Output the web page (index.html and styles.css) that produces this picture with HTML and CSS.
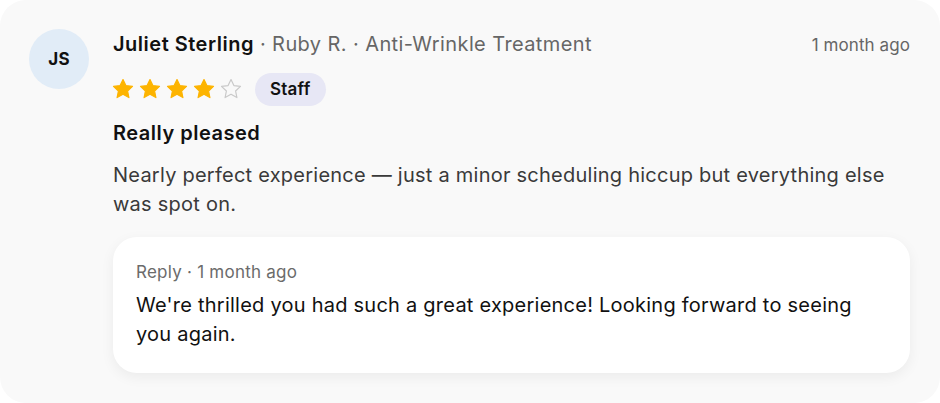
FILE: index.html
```html
<!DOCTYPE html>
<html>
<head>
<meta charset="utf-8">
<link rel="stylesheet" href="styles.css">
</head>
<body>
<div class="card">
  <div class="avatar">JS</div>
  <div class="content">
    <div class="header">
      <div class="who"><span class="name">Juliet Sterling</span><span class="meta"> · Ruby R. · Anti-Wrinkle Treatment</span></div>
      <div class="time">1 month ago</div>
    </div>
    <div class="rating">
      <div class="stars">
        <svg class="star" viewBox="0 0 24 24"><path class="on" d="M12 2.5l2.9 6.1 6.6.8-4.9 4.6 1.3 6.6L12 17.3l-5.9 3.3 1.3-6.6-4.9-4.6 6.6-.8z"/></svg>
        <svg class="star" viewBox="0 0 24 24"><path class="on" d="M12 2.5l2.9 6.1 6.6.8-4.9 4.6 1.3 6.6L12 17.3l-5.9 3.3 1.3-6.6-4.9-4.6 6.6-.8z"/></svg>
        <svg class="star" viewBox="0 0 24 24"><path class="on" d="M12 2.5l2.9 6.1 6.6.8-4.9 4.6 1.3 6.6L12 17.3l-5.9 3.3 1.3-6.6-4.9-4.6 6.6-.8z"/></svg>
        <svg class="star" viewBox="0 0 24 24"><path class="on" d="M12 2.5l2.9 6.1 6.6.8-4.9 4.6 1.3 6.6L12 17.3l-5.9 3.3 1.3-6.6-4.9-4.6 6.6-.8z"/></svg>
        <svg class="star" viewBox="0 0 24 24"><path class="off" d="M12 2.5l2.9 6.1 6.6.8-4.9 4.6 1.3 6.6L12 17.3l-5.9 3.3 1.3-6.6-4.9-4.6 6.6-.8z"/></svg>
      </div>
      <span class="badge">Staff</span>
    </div>
    <div class="title">Really pleased</div>
    <p class="body">Nearly perfect experience — just a minor scheduling hiccup but everything else was spot on.</p>
    <div class="reply">
      <div class="reply-meta">Reply · 1 month ago</div>
      <p class="reply-text">We're thrilled you had such a great experience! Looking forward to seeing you again.</p>
    </div>
  </div>
</div>
</body>
</html>
```
FILE: styles.css
```css
html, body {
  margin: 0;
  padding: 0;
  background: #ffffff;
}
body {
  font-family: Inter, "Noto Sans", sans-serif;
  color: #111;
  letter-spacing: 0.015em;
}
.card {
  box-sizing: border-box;
  width: 940px;
  height: 403px;
  background: #f9f9f9;
  border-radius: 26px;
  padding: 29px 30px 31px 29px;
  display: flex;
  gap: 24px;
}
.avatar {
  flex: none;
  width: 60px;
  height: 60px;
  border-radius: 50%;
  background: #e1ecf7;
  display: flex;
  align-items: center;
  justify-content: center;
  font-size: 17px;
  font-weight: 700;
  color: #111;
  letter-spacing: 0.02em;
}
.content {
  flex: 1;
  min-width: 0;
  display: flex;
  flex-direction: column;
}
.header {
  display: flex;
  justify-content: space-between;
  align-items: baseline;
  line-height: 30px;
}
.name {
  font-size: 20px;
  font-weight: 600;
  letter-spacing: 0.025em;
  color: #111;
}
.meta {
  font-size: 20px;
  color: #666;
  letter-spacing: 0.02em;
}
.time {
  font-size: 17px;
  color: #666;
  letter-spacing: 0.005em;
}
.rating {
  margin-top: 13px;
  display: flex;
  align-items: center;
  gap: 12px;
  height: 33px;
}
.stars {
  display: flex;
  gap: 3px;
  margin-left: -2px;
  margin-top: -1px;
}
.star {
  width: 24px;
  height: 24px;
  display: block;
}
.star .on {
  fill: #fdb400;
  stroke: #fdb400;
  stroke-width: 1.2;
  stroke-linejoin: round;
}
.star .off {
  fill: none;
  stroke: #c9c9c9;
  stroke-width: 1.2;
  stroke-linejoin: round;
}
.badge {
  height: 33px;
  line-height: 33px;
  padding: 0 15px;
  border-radius: 17px;
  background: #e7e7f5;
  font-size: 17px;
  font-weight: 600;
  color: #111;
}
.title {
  margin-top: 14px;
  font-size: 20px;
  font-weight: 600;
  line-height: 26px;
  letter-spacing: 0.025em;
  color: #111;
}
.body {
  margin: 15px 0 0;
  font-size: 20px;
  line-height: 29px;
  color: #3a3a3a;
}
.reply {
  margin-top: 18px;
  background: #ffffff;
  border-radius: 24px;
  padding: 23px 23px 24px;
  box-shadow: 0 4px 14px rgba(0, 0, 0, 0.06);
}
.reply-meta {
  font-size: 17px;
  line-height: 24px;
  color: #6b6b6b;
}
.reply-text {
  margin: 7px 0 0;
  font-size: 20px;
  line-height: 29px;
  color: #111;
}
```
